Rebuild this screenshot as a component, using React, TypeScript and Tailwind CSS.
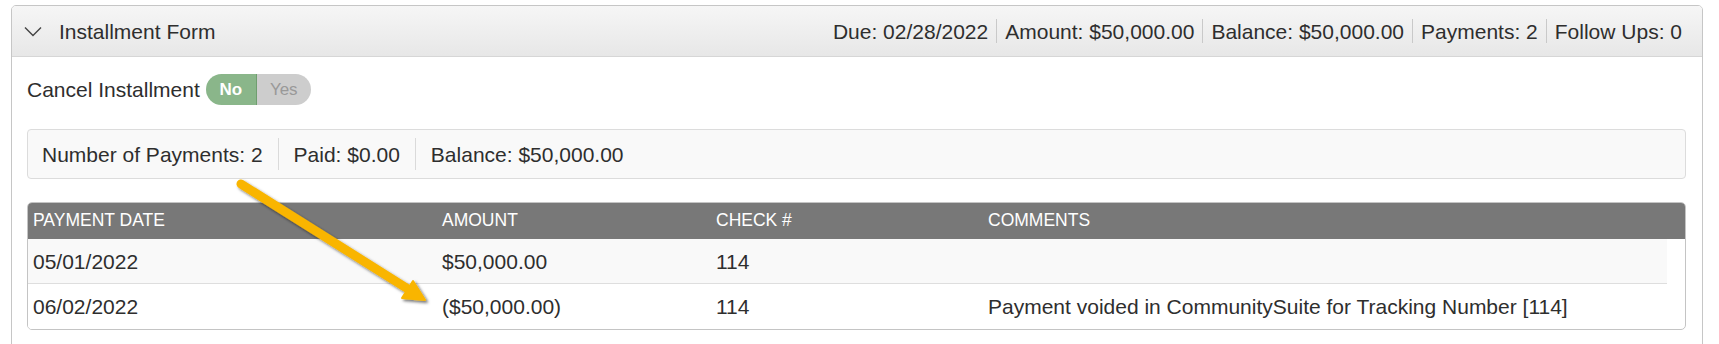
import React from "react";

const headerStats = [
  "Due: 02/28/2022",
  "Amount: $50,000.00",
  "Balance: $50,000.00",
  "Payments: 2",
  "Follow Ups: 0",
];

const summary = ["Number of Payments: 2", "Paid: $0.00", "Balance: $50,000.00"];

const payments = [
  { date: "05/01/2022", amount: "$50,000.00", check: "114", comment: "" },
  {
    date: "06/02/2022",
    amount: "($50,000.00)",
    check: "114",
    comment: "Payment voided in CommunitySuite for Tracking Number [114]",
  },
];

export default function App() {
  return (
    <div className="relative min-h-screen bg-white pt-[5px] pl-[11px] pr-[16px] font-['Liberation_Sans',Arial,sans-serif] text-[#2e2e2e] overflow-hidden">
      <section className="rounded-t-[5px] border border-[#c6c6c6]">
        {/* Header */}
        <header className="flex h-[51px] items-center rounded-t-[4px] border-b border-[#d6d6d6] bg-gradient-to-b from-[#f6f6f6] to-[#e7e7e7] pl-[12px] pr-[20px]">
          <ChevronDown className="w-[18px] h-[11px] text-[#444]" />
          <span className="ml-[17px] text-[21px] leading-none">Installment Form</span>
          <div className="ml-auto flex items-center text-[21px] leading-none">
            {headerStats.map((s, i) => (
              <React.Fragment key={s}>
                {i > 0 && <span className="mx-[8px] h-[24px] w-px bg-[#c9c9c9]" />}
                <span>{s}</span>
              </React.Fragment>
            ))}
          </div>
        </header>

        {/* Body */}
        <div className="pl-[15px] pr-[16px] pt-[17px] pb-[30px]">
          <div className="flex h-[31px] items-center">
            <span className="text-[21px] leading-none">Cancel Installment</span>
            <div className="ml-[6px] flex h-[31px] overflow-hidden rounded-full text-[17px] leading-none">
              <span className="flex w-[51px] items-center justify-center border-r border-[#6f9e6f] bg-[#8ab68a] font-bold text-white">
                No
              </span>
              <span className="flex w-[54px] items-center justify-center bg-[#cdcdcd] text-[#999]">
                Yes
              </span>
            </div>
          </div>

          {/* Summary */}
          <div className="mt-[24px] flex h-[50px] items-center rounded-[4px] border border-[#dcdcdc] bg-[#f9f9f9] px-[14px] text-[21px] leading-none">
            {summary.map((s, i) => (
              <React.Fragment key={s}>
                {i > 0 && <span className="mx-[15px] h-[32px] w-px bg-[#dadada]" />}
                <span>{s}</span>
              </React.Fragment>
            ))}
          </div>

          {/* Payments table */}
          <div className="mt-[23px] overflow-hidden rounded-[5px] border border-[#c4c4c4]">
            <div className="grid h-[36px] grid-cols-[409px_274px_272px_1fr] items-center bg-[#787878] pl-[5px] text-[17.5px] leading-none text-white">
              <span>PAYMENT DATE</span>
              <span>AMOUNT</span>
              <span>CHECK #</span>
              <span>COMMENTS</span>
            </div>
            <div className="w-[calc(100%-18px)]">
              {payments.map((p, i) => (
                <div
                  key={i}
                  className={`grid h-[45px] grid-cols-[409px_274px_272px_1fr] items-center pl-[5px] text-[21px] leading-none ${
                    i === 0 ? "border-b border-[#dedede] bg-[#f9f9f9]" : "bg-white"
                  }`}
                >
                  <span>{p.date}</span>
                  <span>{p.amount}</span>
                  <span>{p.check}</span>
                  <span>{p.comment}</span>
                </div>
              ))}
            </div>
          </div>
        </div>
      </section>

      {/* Annotation arrow */}
      <svg
        className="pointer-events-none absolute left-0 top-0"
        width="1719"
        height="344"
        viewBox="0 0 1719 344"
      >
        <defs>
          <filter id="arrowShadow" x="-20%" y="-20%" width="140%" height="140%">
            <feDropShadow dx="2" dy="2" stdDeviation="1.5" floodColor="#000" floodOpacity="0.55" />
          </filter>
        </defs>
        <g filter="url(#arrowShadow)" fill="#f9b500" stroke="#f9b500">
          <line x1="241" y1="184" x2="408" y2="289" strokeWidth="9" strokeLinecap="round" />
          <polygon points="425,300 413,281 402,298" strokeWidth="2" strokeLinejoin="round" />
        </g>
      </svg>
    </div>
  );
}

function ChevronDown({ className }: { className?: string }) {
  return (
    <svg className={className} viewBox="0 0 18 11" fill="none" stroke="currentColor" strokeWidth={1.4}>
      <path d="M1 1.5 9 9.5 17 1.5" />
    </svg>
  );
}
